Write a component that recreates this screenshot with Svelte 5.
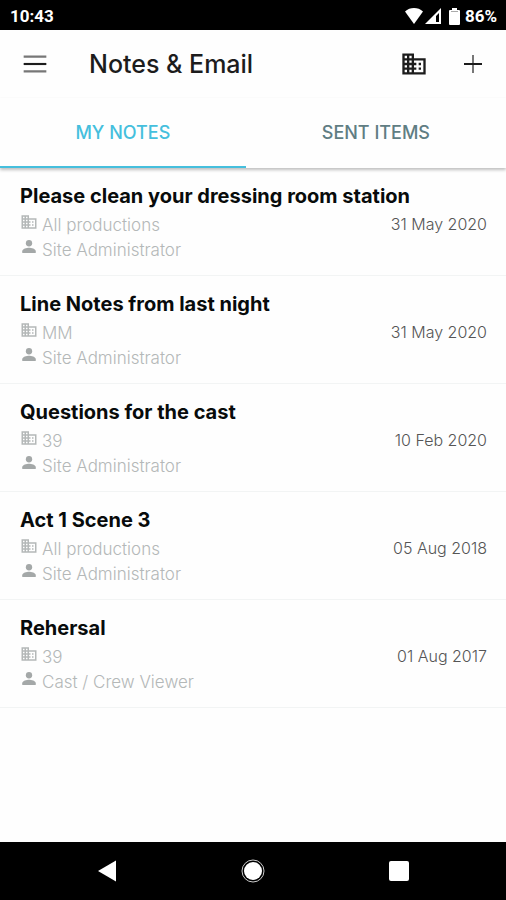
<script>
  const tabs = [
    { id: "notes", label: "MY NOTES" },
    { id: "sent", label: "SENT ITEMS" }
  ];

  const notes = [
    {
      title: "Please clean your dressing room station",
      production: "All productions",
      author: "Site Administrator",
      date: "31 May 2020"
    },
    {
      title: "Line Notes from last night",
      production: "MM",
      author: "Site Administrator",
      date: "31 May 2020"
    },
    {
      title: "Questions for the cast",
      production: "39",
      author: "Site Administrator",
      date: "10 Feb 2020"
    },
    {
      title: "Act 1 Scene 3",
      production: "All productions",
      author: "Site Administrator",
      date: "05 Aug 2018"
    },
    {
      title: "Rehersal",
      production: "39",
      author: "Cast / Crew Viewer",
      date: "01 Aug 2017"
    }
  ];

  let active = "notes";
</script>

<div class="screen">
  <div class="status">
    <span>10:43</span>
    <div class="status-icons">
      <svg class="wifi" viewBox="0 0 18 16" aria-hidden="true">
        <path d="M0 3.5C5-1.1 13-1.1 18 3.5L9 16z" />
      </svg>
      <svg class="signal" viewBox="0 0 16 16" aria-hidden="true">
        <path fill-rule="evenodd" d="M16 0v16H0zM14 5l-3 3v6h3z" />
      </svg>
      <svg class="battery" viewBox="0 0 11 17" aria-hidden="true">
        <path d="M3 0h5v2h2q1 0 1 1v13q0 1-1 1H1q-1 0-1-1V3q0-1 1-1h2z" />
        <path class="level" d="M2 3h7v1H2z" />
      </svg>
      <span>86%</span>
    </div>
  </div>

  <header class="bar">
    <button type="button" class="icon-button" aria-label="Menu">
      <svg width="32" height="32" viewBox="0 0 24 24" aria-hidden="true">
        <path class="faint" d="M3.5 5.7h17v1.6h-17zM3.5 16.7h17v1.6h-17z" />
        <path d="M3.5 11.2h17v1.6h-17z" />
      </svg>
    </button>
    <h1>Notes &amp; Email</h1>
    <button type="button" class="icon-button" aria-label="Productions">
      <svg width="28" height="28" viewBox="0 0 24 24" aria-hidden="true">
        <path
          fill-rule="evenodd"
          d="M12 7V3H2v18h20V7H12zM6 19H4v-2h2v2zm0-4H4v-2h2v2zm0-4H4V9h2v2zm0-4H4V5h2v2zm4 12H8v-2h2v2zm0-4H8v-2h2v2zm0-4H8V9h2v2zm0-4H8V5h2v2zm10 12h-8v-2h2v-2h-2v-2h2v-2h-2V9h8v10zm-2-8h-2v2h2v-2zm0 4h-2v2h2v-2z"
        />
      </svg>
    </button>
    <button type="button" class="icon-button add" aria-label="New note">
      <svg width="20" height="20" viewBox="0 0 20 20" aria-hidden="true">
        <path class="faint" d="M9 1h2v18H9z" />
        <path d="M1 9h18v2H1z" />
      </svg>
    </button>
  </header>

  <div class="tabs" role="tablist">
    {#each tabs as tab (tab.id)}
      <button
        type="button"
        role="tab"
        class="tab"
        class:is-active={active === tab.id}
        aria-selected={active === tab.id}
        on:click={() => (active = tab.id)}
      >
        {tab.label}
      </button>
    {/each}
  </div>

  <main>
    {#if active === "notes"}
      <ul class="notes">
        {#each notes as note (note.title)}
          <li class="note">
            <h2>{note.title}</h2>
            <div class="details">
              <div class="meta">
                <svg width="18" height="18" viewBox="0 0 24 24" aria-hidden="true">
                  <path
                    fill-rule="evenodd"
                    d="M12 7V3H2v18h20V7H12zM6 19H4v-2h2v2zm0-4H4v-2h2v2zm0-4H4V9h2v2zm0-4H4V5h2v2zm4 12H8v-2h2v2zm0-4H8v-2h2v2zm0-4H8V9h2v2zm0-4H8V5h2v2zm10 12h-8v-2h2v-2h-2v-2h2v-2h-2V9h8v10zm-2-8h-2v2h2v-2zm0 4h-2v2h2v-2z"
                  />
                </svg>
                <span>{note.production}</span>
              </div>
              <time>{note.date}</time>
            </div>
            <div class="meta">
              <svg class="person" width="18" height="18" viewBox="0 0 24 24" aria-hidden="true">
                <circle cx="12" cy="7" r="4.2" />
                <path d="M3 20v-2.5c0-3 6-4.5 9-4.5s9 1.5 9 4.5V20z" />
              </svg>
              <span>{note.author}</span>
            </div>
          </li>
        {/each}
      </ul>
    {/if}
  </main>

  <nav class="system" aria-label="System">
    <button type="button" aria-label="Back">
      <svg width="24" height="24" viewBox="0 0 24 24" aria-hidden="true">
        <path d="M21 1.5v21L3 12z" />
      </svg>
    </button>
    <button type="button" aria-label="Home">
      <svg width="24" height="24" viewBox="0 0 24 24" aria-hidden="true">
        <circle cx="12" cy="12" r="9" />
        <circle class="ring" cx="12" cy="12" r="11" />
      </svg>
    </button>
    <button type="button" aria-label="Recent apps">
      <svg width="24" height="24" viewBox="0 0 24 24" aria-hidden="true">
        <rect x="2" y="2" width="20" height="20" rx="2" />
      </svg>
    </button>
  </nav>
</div>

<style>
  :global(body) {
    margin: 0;
    background: #fefefe;
  }

  .screen {
    display: flex;
    flex-direction: column;
    min-height: 100vh;
    font-family: Inter, Roboto, "Liberation Sans", sans-serif;
    color: #1c1c1c;
  }

  svg {
    display: block;
    flex: none;
    fill: currentColor;
  }

  button {
    padding: 0;
    border: 0;
    background: none;
    font: inherit;
    color: inherit;
    cursor: pointer;
  }

  .status {
    display: flex;
    justify-content: space-between;
    align-items: center;
    height: 30px;
    padding: 2px 9px 0 10px;
    box-sizing: border-box;
    background: #000;
    color: #fff;
    font-family: Roboto, sans-serif;
    font-size: 17px;
    font-weight: 700;
  }

  .status-icons {
    display: flex;
    align-items: center;
    gap: 4px;
  }

  .wifi {
    width: 18px;
    height: 16px;
    margin-right: -2px;
  }

  .signal {
    width: 16px;
    height: 16px;
    margin-right: 4px;
  }

  .battery {
    width: 11px;
    height: 17px;
    margin-right: 1px;
  }

  .level {
    fill: #aaa;
  }

  .bar {
    display: flex;
    align-items: center;
    height: 68px;
    padding: 0 13px 0 15px;
  }

  .icon-button {
    display: grid;
    place-items: center;
    width: 40px;
    height: 40px;
  }

  .add {
    margin-left: 19px;
  }

  .faint {
    fill: #777;
  }

  h1 {
    flex: 1;
    margin: 0 0 0 34px;
    font-size: 25px;
    font-weight: 500;
  }

  .tabs {
    position: relative;
    display: grid;
    grid-template-columns: 17fr 18fr;
    height: 70px;
    box-shadow: 0 2px 3px rgba(0, 0, 0, 0.25);
  }

  .tab {
    border-bottom: 2px solid transparent;
    color: #607d83;
    font-size: 18px;
    font-weight: 500;
  }

  .tab.is-active {
    border-color: #45bfdd;
    color: #45bfdd;
  }

  main {
    flex: 1;
  }

  .notes {
    margin: 0;
    padding: 0;
    list-style: none;
  }

  .note {
    padding: 16px 19px 12px 20px;
    border-bottom: 1px solid #f2f4f4;
  }

  h2 {
    margin: 0 0 5px;
    color: #080b0b;
    font-size: 20px;
    font-weight: 700;
    line-height: 24px;
  }

  .details {
    display: flex;
    justify-content: space-between;
    gap: 16px;
  }

  .meta {
    display: flex;
    gap: 4px;
    color: #b4b8b8;
    font-size: 17px;
    font-weight: 300;
    line-height: 25px;
  }

  .person {
    color: #a4a8a8;
  }

  time {
    color: #555;
    font-size: 16px;
    font-weight: 300;
    line-height: 22px;
  }

  .system {
    display: flex;
    justify-content: center;
    gap: 98px;
    height: 58px;
    background: #000;
    color: #fff;
  }

  .system button {
    display: grid;
    place-items: center;
    width: 48px;
  }

  .ring {
    fill: none;
    stroke: #ccc;
  }
</style>
